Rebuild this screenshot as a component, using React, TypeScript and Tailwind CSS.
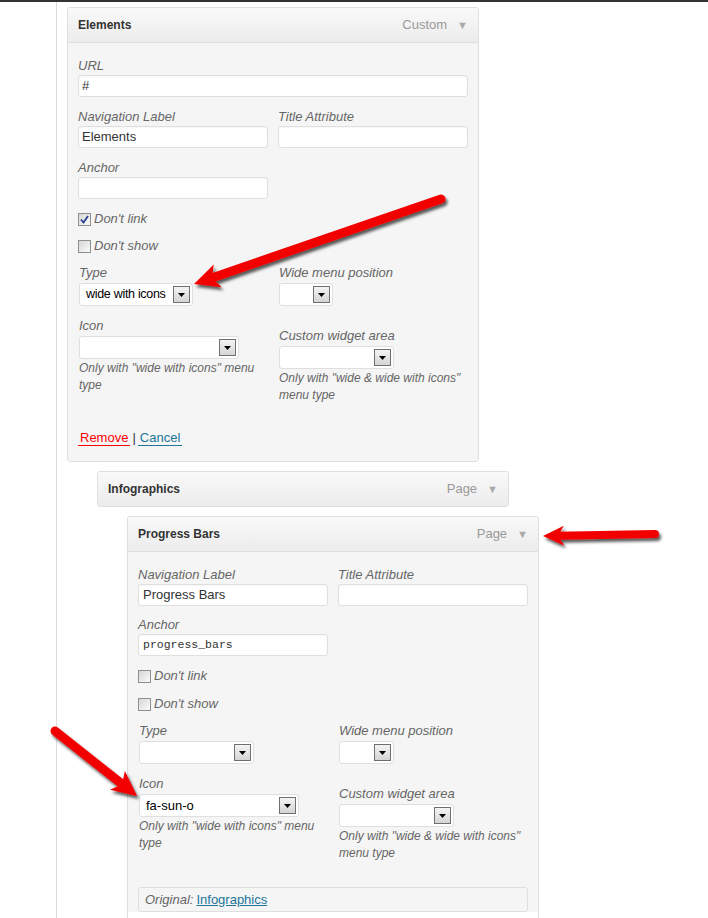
import type { ReactNode } from "react";

const label = "block italic text-[13px] leading-[18px] text-[#666]";
const input =
    "h-[22px] rounded-[3px] border border-[#dfdfdf] bg-white leading-[20px] text-[#333] shadow-[inset_0_1px_2px_rgba(0,0,0,0.04)]";
const help = "mt-[1px] w-[190px] italic text-[12px] leading-[17px] text-[#666]";

const DropButton = () => (
    <div className="flex h-[17px] w-[17px] items-center justify-center border border-[#6f6f6f] bg-linear-to-b from-[#f4f4f4] to-[#d4d4d4]">
        <svg width="7" height="4" viewBox="0 0 7 4">
            <polygon points="0,0 7,0 3.5,4" fill="#000" />
        </svg>
    </div>
);

const Select = ({ className, value }: { className: string; value?: string }) => (
    <div
        className={`mt-[1px] flex h-[23px] items-center justify-between rounded-[3px] border border-[#dfdfdf] bg-white pl-[6px] pr-[2px] whitespace-nowrap text-black ${className}`}
    >
        <span>{value}</span>
        <DropButton />
    </div>
);

const Checkbox = ({ checked, text, className }: { checked?: boolean; text: string; className: string }) => (
    <div className={`flex h-[18px] items-center gap-[3px] ${className}`}>
        <div className="flex h-[13px] w-[13px] items-center justify-center border border-[#8e8f8f] bg-linear-to-br from-[#d6d6d6] to-[#fbfbfb]">
            {checked && (
                <svg width="9" height="9" viewBox="0 0 9 9">
                    <path d="M1 4.5 L3.5 7.5 L8 1" fill="none" stroke="#2a3f8f" strokeWidth="1.8" />
                </svg>
            )}
        </div>
        <span className="italic text-[13px] text-[#666]">{text}</span>
    </div>
);

const Header = ({ title, kind }: { title: string; kind: string }) => (
    <div className="flex h-[34px] items-center justify-between bg-linear-to-b from-[#f9f9f9] to-[#ececec] pl-[10px] pr-[10px]">
        <span className="text-[12px] font-bold text-[#333]">{title}</span>
        <span className="flex items-center gap-[10px] text-[13px] text-[#999]">
            {kind}
            <span className="text-[11px] text-[#aaa]">▼</span>
        </span>
    </div>
);

const Card = ({ title, kind, className, children }: { title: string; kind: string; className: string; children?: ReactNode }) => (
    <div className={`w-[412px] overflow-hidden rounded-[3px] border border-[#dfdfdf] ${className}`}>
        <Header title={title} kind={kind} />
        {children && (
            <div className="border-t border-[#dfdfdf] bg-[#f5f5f5] px-[10px] pt-[14px]">{children}</div>
        )}
    </div>
);

const Arrow = ({ x1, y1, x2, y2, head, half, w }: { x1: number; y1: number; x2: number; y2: number; head: number; half: number; w: number }) => {
    const len = Math.hypot(x2 - x1, y2 - y1);
    const ux = (x2 - x1) / len;
    const uy = (y2 - y1) / len;
    const nx = -uy;
    const ny = ux;
    const bx = x2 - ux * head;
    const by = y2 - uy * head;
    const pts = [
        [x2, y2],
        [bx + nx * half - ux * 3, by + ny * half - uy * 3],
        [bx + ux * 3, by + uy * 3],
        [bx - nx * half - ux * 3, by - ny * half - uy * 3],
    ]
        .map((p) => p.join(","))
        .join(" ");
    return (
        <g filter="url(#shadow)">
            <line x1={x1} y1={y1} x2={bx + ux * 4} y2={by + uy * 4} stroke="#f20000" strokeWidth={w} strokeLinecap="round" />
            <polygon points={pts} fill="#f20000" />
        </g>
    );
};

const App = () => {
    return (
        <div className="relative h-[918px] overflow-hidden bg-white font-['Liberation_Sans',Arial,sans-serif]">
            <div className="h-[2px] bg-[#333]" />
            <div className="ml-[56px] min-h-[916px] border-l border-[#dcdcdc] pl-[10px] pt-[5px]">
                {/* Elements */}
                <Card title="Elements" kind="Custom" className="">
                    <label className={label}>URL</label>
                    <div className={`${input} w-[390px] pl-[3px] text-[13px]`}>#</div>

                    <div className="mt-[11px] flex gap-[10px]">
                        <div>
                            <label className={label}>Navigation Label</label>
                            <div className={`${input} w-[190px] pl-[3px] text-[13px]`}>Elements</div>
                        </div>
                        <div>
                            <label className={label}>Title Attribute</label>
                            <div className={`${input} w-[190px]`} />
                        </div>
                    </div>

                    <div className="mt-[11px]">
                        <label className={label}>Anchor</label>
                        <div className={`${input} w-[190px]`} />
                    </div>

                    <Checkbox checked text="Don't link" className="mt-[11px]" />
                    <Checkbox text="Don't show" className="mt-[9px]" />

                    <div className="mt-[9px] flex gap-[10px]">
                        <div className="w-[190px] pl-[1px]">
                            <label className={label}>Type</label>
                            <Select className="w-[114px] text-[12.5px] tracking-[-0.3px]" value="wide with icons" />
                            <label className={`${label} mt-[11px]`}>Icon</label>
                            <Select className="w-[160px]" />
                            <p className={help}>Only with "wide with icons" menu type</p>
                        </div>
                        <div className="w-[190px] pl-[1px]">
                            <label className={label}>Wide menu position</label>
                            <Select className="w-[54px]" />
                            <label className={`${label} mt-[21px]`}>Custom widget area</label>
                            <Select className="w-[115px]" />
                            <p className={help}>Only with "wide &amp; wide with icons" menu type</p>
                        </div>
                    </div>

                    <div className="mt-[25px] pb-[14px] text-[13px] leading-[18px]">
                        <a className="border-b border-[#f00] px-[2px] text-[#f00]">Remove</a>
                        <span className="px-[2px] text-[#333]">|</span>
                        <a className="border-b border-[#21759b] px-[2px] text-[#21759b]">Cancel</a>
                    </div>
                </Card>

                {/* Infographics */}
                <Card title="Infographics" kind="Page" className="ml-[30px] mt-[9px]" />

                {/* Progress Bars */}
                <Card title="Progress Bars" kind="Page" className="ml-[60px] mt-[9px]">
                    <div className="flex gap-[10px]">
                        <div>
                            <label className={label}>Navigation Label</label>
                            <div className={`${input} w-[190px] pl-[4px] text-[13px]`}>Progress Bars</div>
                        </div>
                        <div>
                            <label className={label}>Title Attribute</label>
                            <div className={`${input} w-[190px]`} />
                        </div>
                    </div>

                    <div className="mt-[10px]">
                        <label className={label}>Anchor</label>
                        <div className={`${input} w-[190px] pl-[4px] font-['Liberation_Mono',monospace] text-[11.5px]`}>
                            progress_bars
                        </div>
                    </div>

                    <Checkbox text="Don't link" className="mt-[11px]" />
                    <Checkbox text="Don't show" className="mt-[10px]" />

                    <div className="mt-[9px] flex gap-[10px]">
                        <div className="w-[190px] pl-[1px]">
                            <label className={label}>Type</label>
                            <Select className="w-[115px]" />
                            <label className={`${label} mt-[11px]`}>Icon</label>
                            <Select className="w-[160px] text-[13px]" value="fa-sun-o" />
                            <p className={help}>Only with "wide with icons" menu type</p>
                        </div>
                        <div className="w-[190px] pl-[1px]">
                            <label className={label}>Wide menu position</label>
                            <Select className="w-[55px]" />
                            <label className={`${label} mt-[21px]`}>Custom widget area</label>
                            <Select className="w-[115px]" />
                            <p className={help}>Only with "wide &amp; wide with icons" menu type</p>
                        </div>
                    </div>

                    <div className="mt-[25px] mb-[12px] flex h-[25px] w-[390px] items-center gap-[3px] rounded-[3px] border border-[#dfdfdf] pl-[6px] text-[13px]">
                        <span className="italic text-[#666]">Original:</span>
                        <a className="text-[#21759b] underline">Infographics</a>
                    </div>
                </Card>
            </div>

            {/* annotation arrows */}
            <svg className="pointer-events-none absolute left-0 top-0" width="708" height="918">
                <defs>
                    <filter id="shadow" x="-20%" y="-20%" width="140%" height="140%">
                        <feDropShadow dx="2" dy="3" stdDeviation="1.8" floodColor="#000" floodOpacity="0.65" />
                    </filter>
                </defs>
                <Arrow x1={441} y1={199} x2={194} y2={284} head={22} half={12} w={9} />
                <Arrow x1={655} y1={534} x2={543} y2={536} head={18} half={10} w={8} />
                <Arrow x1={55} y1={731} x2={137} y2={796} head={22} half={12} w={9} />
            </svg>
        </div>
    );
};

export default App;
